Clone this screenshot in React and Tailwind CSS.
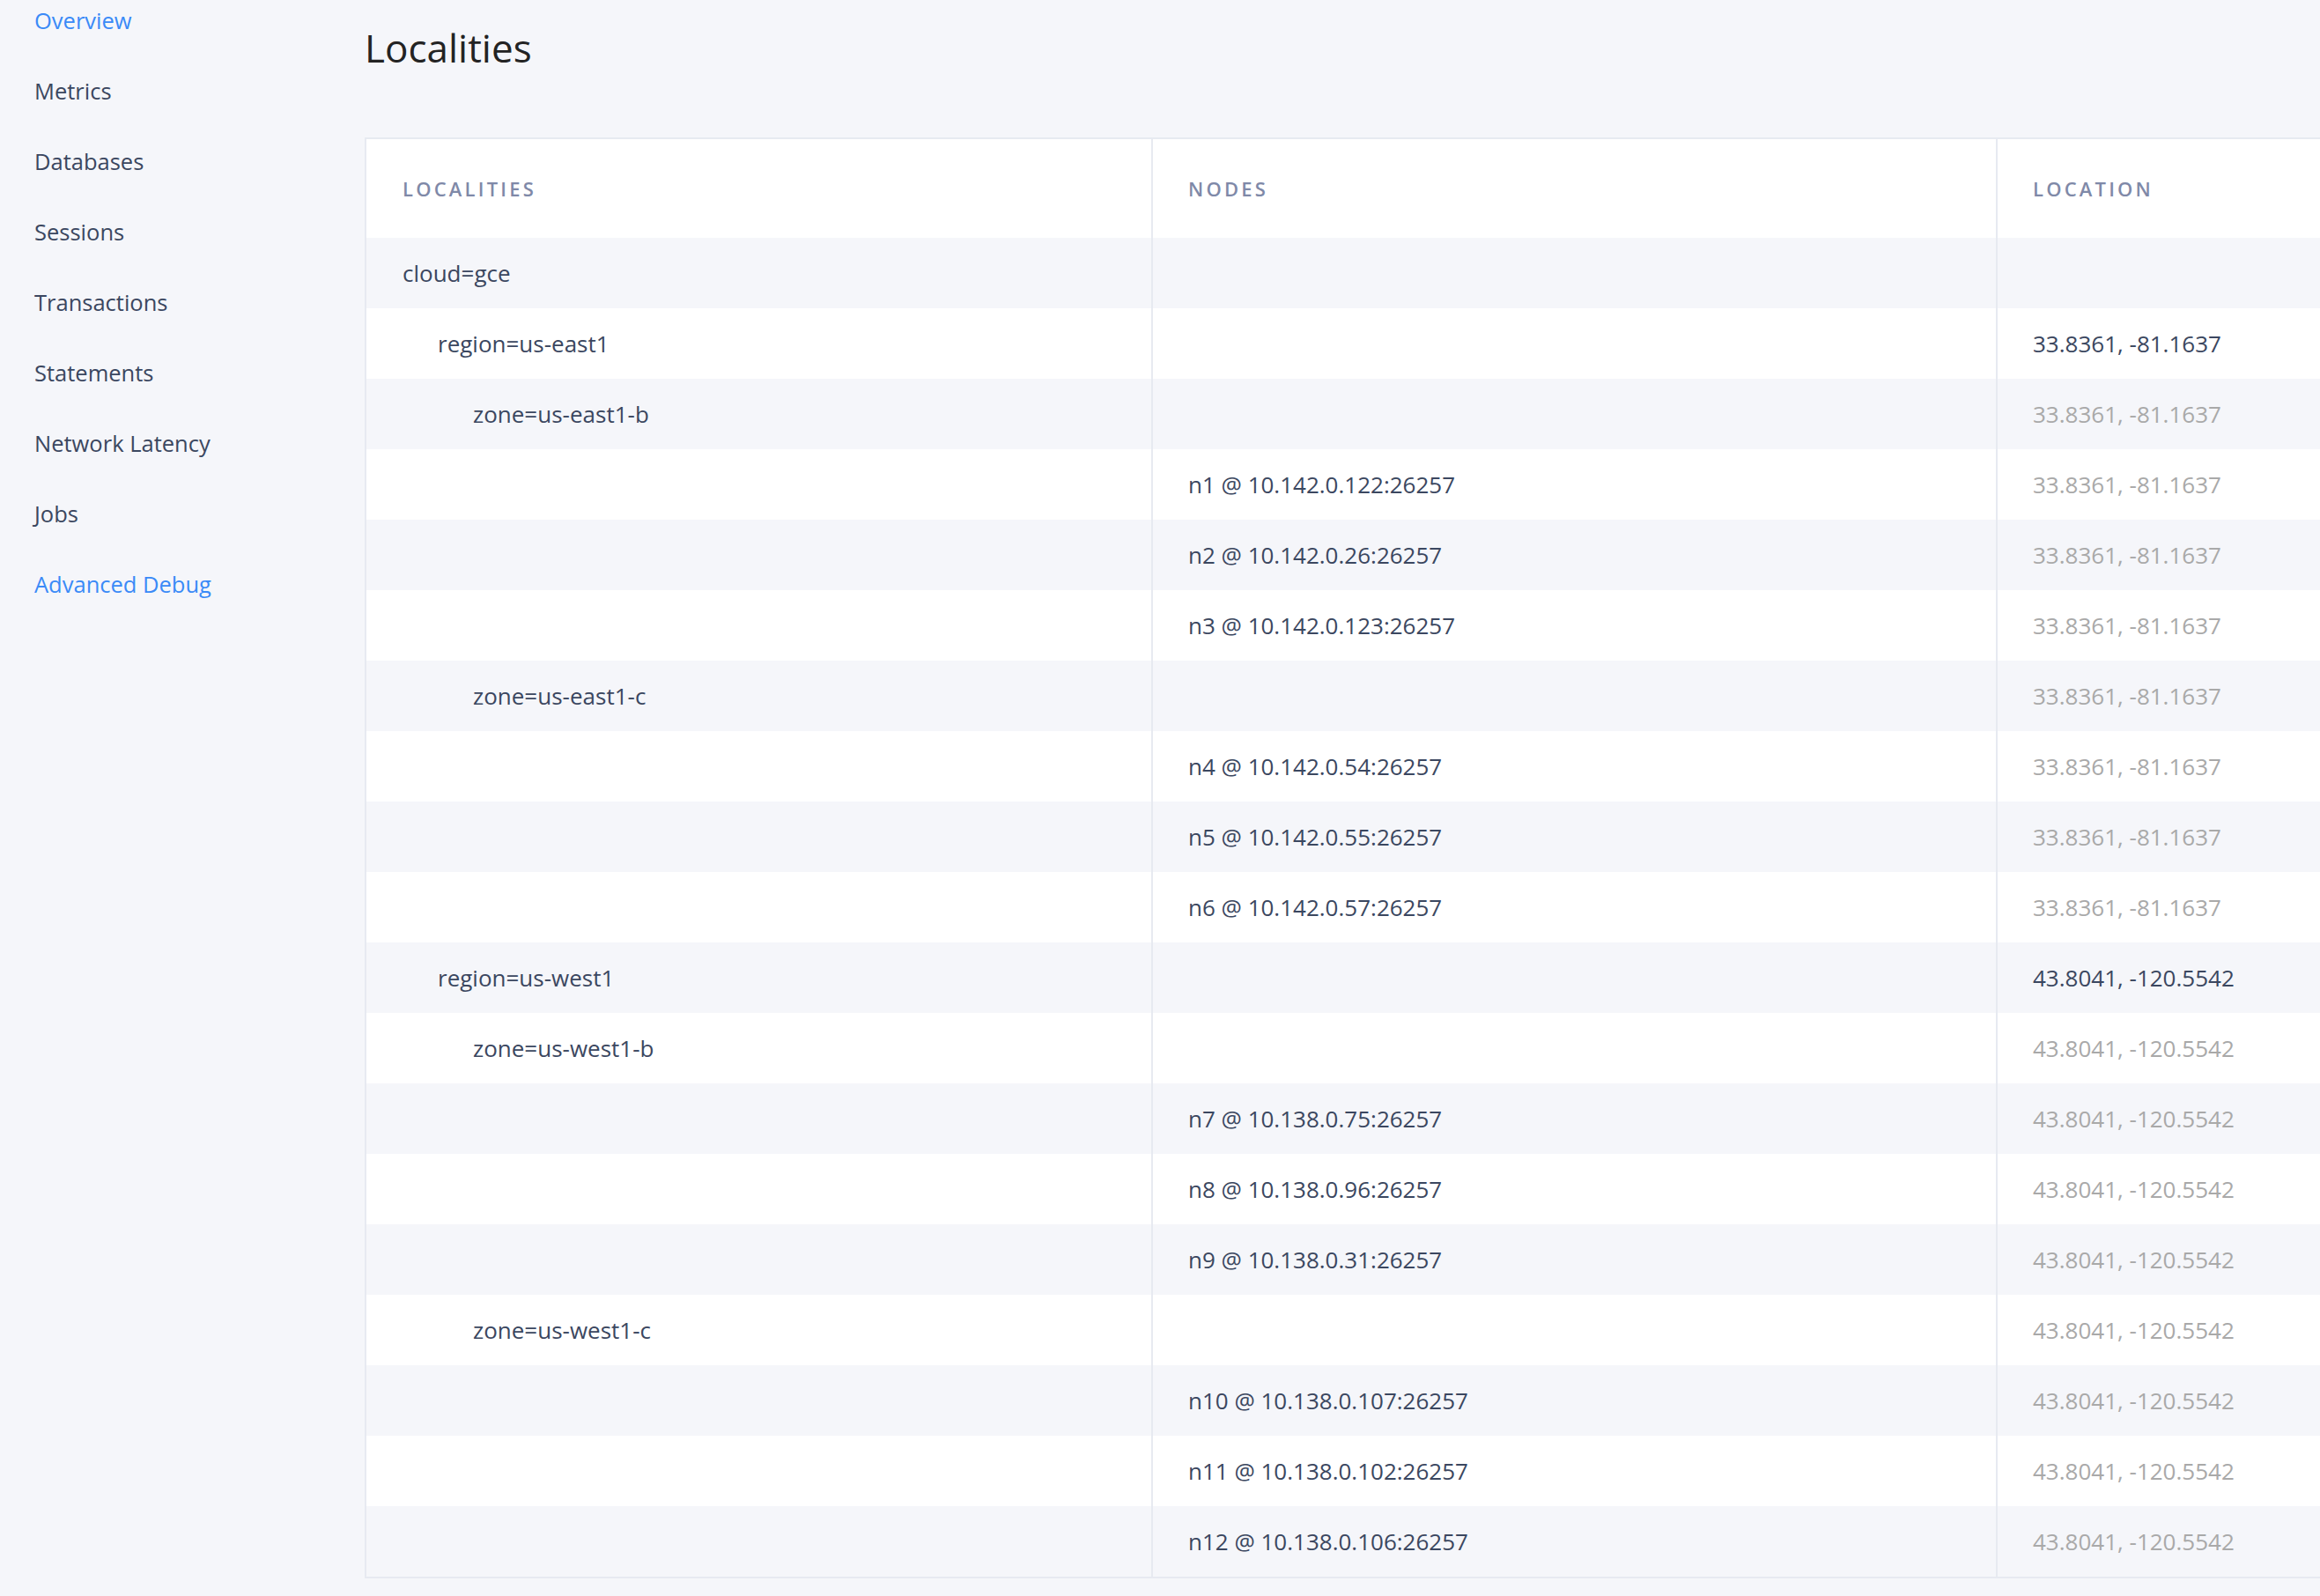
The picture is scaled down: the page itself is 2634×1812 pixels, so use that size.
import React from 'react';

const navItems = [
  { label: 'Overview', active: true },
  { label: 'Metrics' },
  { label: 'Databases' },
  { label: 'Sessions' },
  { label: 'Transactions' },
  { label: 'Statements' },
  { label: 'Network Latency' },
  { label: 'Jobs' },
  { label: 'Advanced Debug', active: true },
];

const EAST = '33.8361, -81.1637';
const WEST = '43.8041, -120.5542';

const rows = [
  { locality: 'cloud=gce', level: 0 },
  { locality: 'region=us-east1', level: 1, location: EAST, strong: true },
  { locality: 'zone=us-east1-b', level: 2, location: EAST },
  { node: 'n1 @ 10.142.0.122:26257', location: EAST },
  { node: 'n2 @ 10.142.0.26:26257', location: EAST },
  { node: 'n3 @ 10.142.0.123:26257', location: EAST },
  { locality: 'zone=us-east1-c', level: 2, location: EAST },
  { node: 'n4 @ 10.142.0.54:26257', location: EAST },
  { node: 'n5 @ 10.142.0.55:26257', location: EAST },
  { node: 'n6 @ 10.142.0.57:26257', location: EAST },
  { locality: 'region=us-west1', level: 1, location: WEST, strong: true },
  { locality: 'zone=us-west1-b', level: 2, location: WEST },
  { node: 'n7 @ 10.138.0.75:26257', location: WEST },
  { node: 'n8 @ 10.138.0.96:26257', location: WEST },
  { node: 'n9 @ 10.138.0.31:26257', location: WEST },
  { locality: 'zone=us-west1-c', level: 2, location: WEST },
  { node: 'n10 @ 10.138.0.107:26257', location: WEST },
  { node: 'n11 @ 10.138.0.102:26257', location: WEST },
  { node: 'n12 @ 10.138.0.106:26257', location: WEST },
];

const indent = ['pl-[41px]', 'pl-[81px]', 'pl-[121px]'];

const Sidebar = () => (
  <aside className="w-[374px] shrink-0">
    <nav className="-mt-[17px] pl-[39px]">
      {navItems.map((item) => (
        <div
          key={item.label}
          className={`h-[80px] flex items-center text-[25.5px] ${
            item.active ? 'text-[#3a8af7]' : 'text-[#3b4760]'
          }`}
        >
          {item.label}
        </div>
      ))}
    </nav>
  </aside>
);

const HeaderCell = ({ children, className = '' }) => (
  <div
    className={`h-[112px] flex items-center text-[22px] font-semibold tracking-[3.2px] text-[#7f89a8] ${className}`}
  >
    {children}
  </div>
);

const LocalitiesTable = () => (
  <div className="w-[2400px] border-2 border-[#e7eaf1] bg-white">
    <div className="flex">
      <HeaderCell className="w-[891px] pl-[41px]">LOCALITIES</HeaderCell>
      <HeaderCell className="w-[959px] pl-[40px] border-l-2 border-[#e7eaf1]">NODES</HeaderCell>
      <HeaderCell className="flex-1 pl-[40px] border-l-2 border-[#e7eaf1]">LOCATION</HeaderCell>
    </div>
    {rows.map((row, i) => (
      <div
        key={i}
        className={`flex h-[80px] text-[26px] text-[#3b4760] ${i % 2 === 0 ? 'bg-[#f5f6fa]' : 'bg-white'}`}
      >
        <div className={`w-[891px] flex items-center ${row.locality ? indent[row.level] : ''}`}>
          {row.locality}
        </div>
        <div className="w-[959px] flex items-center pl-[40px] border-l-2 border-[#e7eaf1]">
          {row.node}
        </div>
        <div
          className={`flex-1 flex items-center pl-[40px] border-l-2 border-[#e7eaf1] ${
            row.strong ? 'text-[#3b4760]' : 'text-[#a9a9a9]'
          }`}
        >
          {row.location}
        </div>
      </div>
    ))}
  </div>
);

export default function App() {
  return (
    <div
      className="w-[2634px] h-[1812px] overflow-hidden bg-[#f5f6fa] flex"
      style={{ fontFamily: '"Open Sans", "Noto Sans", sans-serif' }}
    >
      <Sidebar />
      <main className="flex-1 min-w-0 pl-[40px] overflow-hidden">
        <h1 className="mt-[32px] h-[44px] leading-[44px] text-[44px] text-[#232323]">Localities</h1>
        <div className="mt-[80px]">
          <LocalitiesTable />
        </div>
      </main>
    </div>
  );
}
